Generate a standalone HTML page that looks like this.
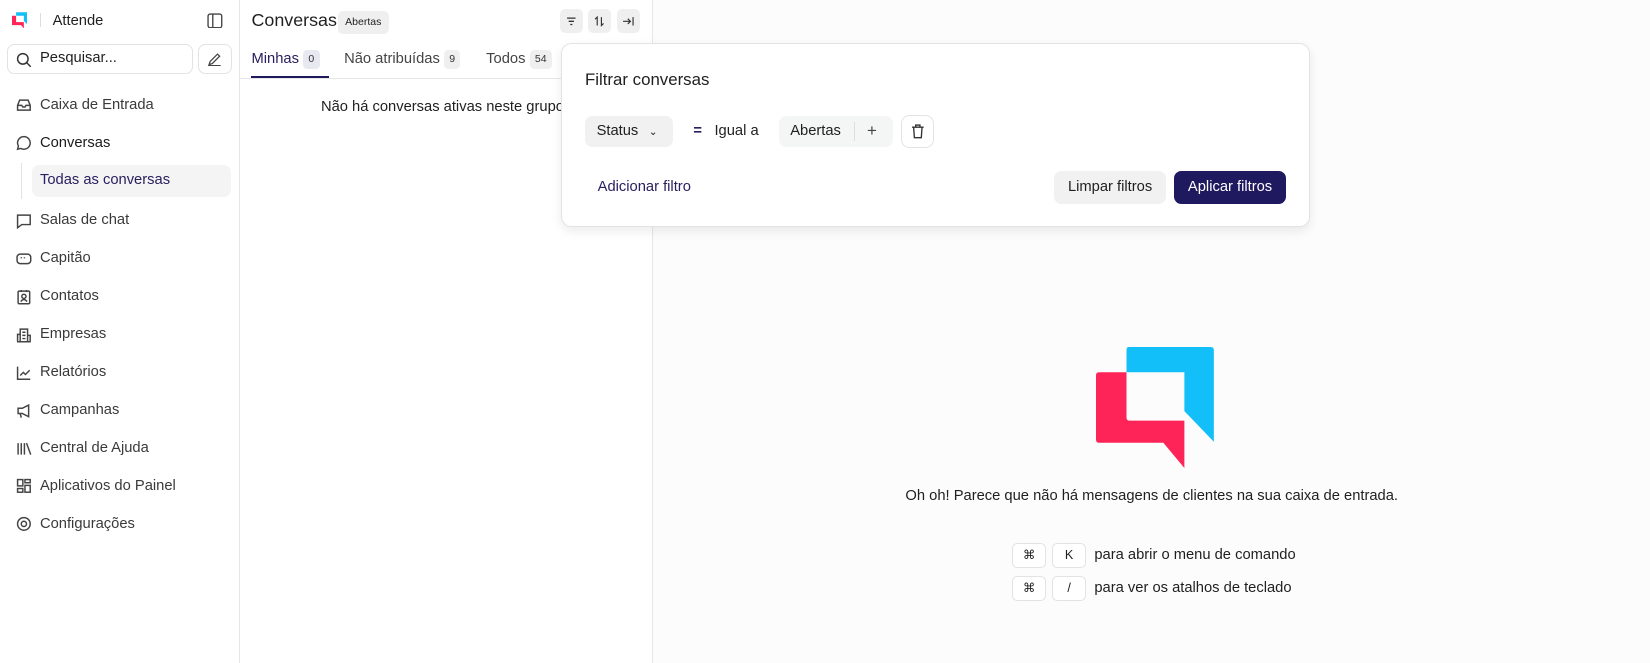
<!DOCTYPE html>
<html><head><meta charset="utf-8"><style>
*{box-sizing:border-box;margin:0;padding:0}
html,body{width:1650px;height:663px;overflow:hidden;background:#fff}
#root{width:1568px;height:630px;zoom:1.05229;position:relative;font-family:"Liberation Sans",sans-serif;color:#1f1f1f;font-size:14px;line-height:1.45}
.abs{position:absolute}
.side{left:0;top:0;width:228px;height:630px;border-right:1px solid #e6e6e6;background:#fff}
.list{left:228px;top:0;width:393px;height:630px;border-right:1px solid #e6e6e6;background:#fff}
.main{left:621px;top:0;width:947px;height:630px;background:#fcfcfc}
.nav{position:absolute;left:15px;display:flex;align-items:center;gap:8px;color:#3a3a3a;font-size:14px}
.nav svg{width:15px;height:15px;stroke:#444;fill:none;stroke-width:1.4}
.kbd{display:inline-flex;width:32px;height:24px;border:1px solid #e3e3e3;border-radius:5px;background:#fff;align-items:center;justify-content:center;font-size:12px}
.btn{position:absolute;width:22px;height:22px;border-radius:5px;background:#efefef;display:flex;align-items:center;justify-content:center}
.badge{display:inline-block;background:#efefef;border-radius:4px;font-size:10px;line-height:1.2;padding:3px 5px;margin-left:4px;color:#333;vertical-align:1px}
</style></head><body><div id="root">
<div class="abs side">
  <svg class="abs" style="left:11px;top:11px" width="15" height="16" viewBox="0 0 112 115"><path d="M31 0h78q3 0 3 3v87L84 61V24H29V3q0-3 2-3z" fill="#13bff8"/><path d="M3 24h26v46h55v45L64 91H3q-3 0-3-3V27q0-3 3-3z" fill="#ff2458"/></svg>
  <div class="abs" style="left:38px;top:12px;width:1px;height:14px;background:#ddd"></div>
  <div class="abs" style="left:50px;top:10px;font-size:14px">Attende</div>
  <svg class="abs" style="left:197px;top:12px" width="15" height="15" viewBox="0 0 15 15" fill="none" stroke="#444" stroke-width="1.3"><rect x="1" y="1" width="13" height="13" rx="2"/><path d="M5.5 1v13"/></svg>
  <div class="abs" style="left:7px;top:42px;width:176px;height:28px;border:1px solid #e3e3e3;border-radius:7px"></div>
  <svg class="abs" style="left:15px;top:49px" width="15" height="15" viewBox="0 0 15 15" fill="none" stroke="#333" stroke-width="1.4"><circle cx="6.5" cy="6.5" r="5"/><path d="M10 10l4 4"/></svg>
  <div class="abs" style="left:38px;top:46px;font-size:14px">Pesquisar...</div>
  <div class="abs" style="left:188px;top:42px;width:32px;height:28px;border:1px solid #e3e3e3;border-radius:7px"></div>
  <svg class="abs" style="left:197px;top:49px" width="14" height="14" viewBox="0 0 14 14" fill="none" stroke="#444" stroke-width="1.2"><path d="M2 12l1-3 7-7 2 2-7 7zM1 13h12"/></svg>
  <div class="nav" style="top:90px"><svg viewBox="0 0 15 15"><path d="M1.5 8l2-5h8l2 5v4.5h-12zM1.5 8h4l1 1.5h2l1-1.5h4"/></svg>Caixa de Entrada</div>
  <div class="nav" style="top:126px;color:#1a1a1a"><svg viewBox="0 0 15 15"><path d="M7.5 1.5a6 6 0 1 1-3 11.2L1.5 13.5l.8-3A6 6 0 0 1 7.5 1.5z"/></svg>Conversas</div>
  <div class="abs" style="left:20px;top:155px;width:1px;height:34px;background:#e3e3e3"></div>
  <div class="abs" style="left:30px;top:157px;width:190px;height:30px;background:#f4f4f4;border-radius:7px;color:#2a2060;padding:5px 8px">Todas as conversas</div>
  <div class="nav" style="top:200px"><svg viewBox="0 0 15 15"><path d="M1.5 2h12v9h-8l-4 3z"/></svg>Salas de chat</div>
  <div class="nav" style="top:236px"><svg viewBox="0 0 15 15"><rect x="1" y="3" width="13" height="9" rx="3"/><path d="M5 6v1M8 6v1"/></svg>Capitão</div>
  <div class="nav" style="top:272px"><svg viewBox="0 0 15 15"><rect x="2" y="2" width="11" height="12" rx="1"/><circle cx="7.5" cy="7" r="2"/><path d="M4.5 12q3-4 6 0M5 1v2M10 1v2"/></svg>Contatos</div>
  <div class="nav" style="top:308px"><svg viewBox="0 0 15 15"><path d="M4 14V2h7v12zM1.5 14V7H4M11 8h2.5v6M6 5h3M6 8h3M6 11h3M1 14h13"/></svg>Empresas</div>
  <div class="nav" style="top:344px"><svg viewBox="0 0 15 15"><path d="M1.5 1.5v12h12M4 10l3-3 2 2 4-4"/></svg>Relatórios</div>
  <div class="nav" style="top:380px"><svg viewBox="0 0 15 15"><path d="M2 5h4l6-3v11l-6-3H2zM4 10l1 4"/></svg>Campanhas</div>
  <div class="nav" style="top:416px"><svg viewBox="0 0 15 15"><path d="M2 2v11M5 2v11M8 2v11M10 2l4 11"/></svg>Central de Ajuda</div>
  <div class="nav" style="top:452px"><svg viewBox="0 0 15 15"><rect x="1.5" y="1.5" width="5" height="6"/><rect x="8.5" y="1.5" width="5" height="3"/><rect x="1.5" y="10" width="5" height="3.5"/><rect x="8.5" y="7" width="5" height="6.5"/></svg>Aplicativos do Painel</div>
  <div class="nav" style="top:488px"><svg viewBox="0 0 15 15"><circle cx="7.5" cy="7.5" r="6"/><circle cx="7.5" cy="7.5" r="2.5"/></svg>Configurações</div>
</div>
<div class="abs list">
  <div class="abs" style="left:11px;top:8px;font-size:17px">Conversas</div>
  <div class="abs" style="left:93px;top:10px;background:#efefef;border-radius:5px;font-size:10px;line-height:1.2;padding:5px 7px">Abertas</div>
  <div class="btn" style="left:304px;top:9px"><svg width="12" height="12" viewBox="0 0 12 12" stroke="#333" stroke-width="1.2"><path d="M2 3h8M3.5 6h5M5 9h2"/></svg></div>
  <div class="btn" style="left:331px;top:9px"><svg width="12" height="12" viewBox="0 0 12 12" fill="none" stroke="#333" stroke-width="1.1"><path d="M4 10V2L2 4M8 2v8l2-2"/></svg></div>
  <div class="btn" style="left:358px;top:9px"><svg width="12" height="12" viewBox="0 0 12 12" fill="none" stroke="#333" stroke-width="1.1"><path d="M1 6h7M5.5 3.5L8 6 5.5 8.5M10.5 2v8"/></svg></div>
  <div class="abs" style="left:11px;top:47px;color:#2a2060">Minhas<span class="badge" style="background:#e8e8f0">0</span></div>
  <div class="abs" style="left:11px;top:72px;width:74px;height:2px;background:#1f1960"></div>
  <div class="abs" style="left:99px;top:47px;color:#444">Não atribuídas<span class="badge">9</span></div>
  <div class="abs" style="left:234px;top:47px;color:#444">Todos<span class="badge">54</span></div>
  <div class="abs" style="left:0;top:74px;width:393px;height:1px;background:#e6e6e6"></div>
  <div class="abs" style="left:77px;top:92px;white-space:nowrap">Não há conversas ativas neste grupo.</div>
</div>
<div class="abs main">
  <svg class="abs" style="left:421px;top:330px" width="112" height="115" viewBox="0 0 112 115"><path d="M31 0h78q3 0 3 3v87L84 61V24H29V3q0-3 2-3z" fill="#13bff8"/><path d="M3 24h26v43q0 3 3 3h52v45L64 91H3q-3 0-3-3V27q0-3 3-3z" fill="#ff2458"/></svg>
  <div class="abs" style="left:0;width:947px;top:462px;text-align:center">Oh oh! Parece que não há mensagens de clientes na sua caixa de entrada.</div>
  <div class="abs" style="left:341px;top:516px;display:flex;gap:6px;align-items:center"><span class="kbd">⌘</span><span class="kbd">K</span><span style="margin-left:2px">para abrir o menu de comando</span></div>
  <div class="abs" style="left:341px;top:547px;display:flex;gap:6px;align-items:center"><span class="kbd">⌘</span><span class="kbd">/</span><span style="margin-left:2px">para ver os atalhos de teclado</span></div>
</div>
<div class="abs" style="left:533px;top:41px;width:712px;height:175px;background:#fff;border:1px solid #e3e3e3;border-radius:10px;box-shadow:0 4px 10px rgba(0,0,0,.08)">
  <div class="abs" style="left:22px;top:23px;font-size:16px">Filtrar conversas</div>
  <div class="abs" style="left:22px;top:68px;width:84px;height:30px;background:#f1f1f1;border-radius:7px;padding:5px 11px">Status <span style="font-size:10px;margin-left:6px">⌄</span></div>
  <div class="abs" style="left:125px;top:73px;color:#2a2060;font-weight:bold">=</div>
  <div class="abs" style="left:145px;top:73px">Igual a</div>
  <div class="abs" style="left:206px;top:68px;width:109px;height:30px;background:#f4f5f5;border-radius:7px;padding:5px 11px">Abertas<span class="abs" style="left:72px;top:6px;width:1px;height:18px;background:#ddd"></span><span class="abs" style="left:84px;top:3px;font-size:16px;color:#444">+</span></div>
  <div class="abs" style="left:322px;top:67px;width:32px;height:32px;border:1px solid #e3e3e3;border-radius:8px"><svg style="margin:8px 9px" width="13" height="14" viewBox="0 0 13 14" fill="none" stroke="#333" stroke-width="1.3"><path d="M1 3h11M4.5 3V1h4v2M2.5 3l.7 10h6.6l.7-10"/></svg></div>
  <div class="abs" style="left:34px;top:126px;color:#2a2060">Adicionar filtro</div>
  <div class="abs" style="left:468px;top:121px;width:106px;height:31px;background:#f1f1f1;border-radius:7px;text-align:center;padding-top:5px">Limpar filtros</div>
  <div class="abs" style="left:582px;top:121px;width:106px;height:31px;background:#1f1960;color:#fff;border-radius:7px;text-align:center;padding-top:5px">Aplicar filtros</div>
</div>
</div></body></html>
